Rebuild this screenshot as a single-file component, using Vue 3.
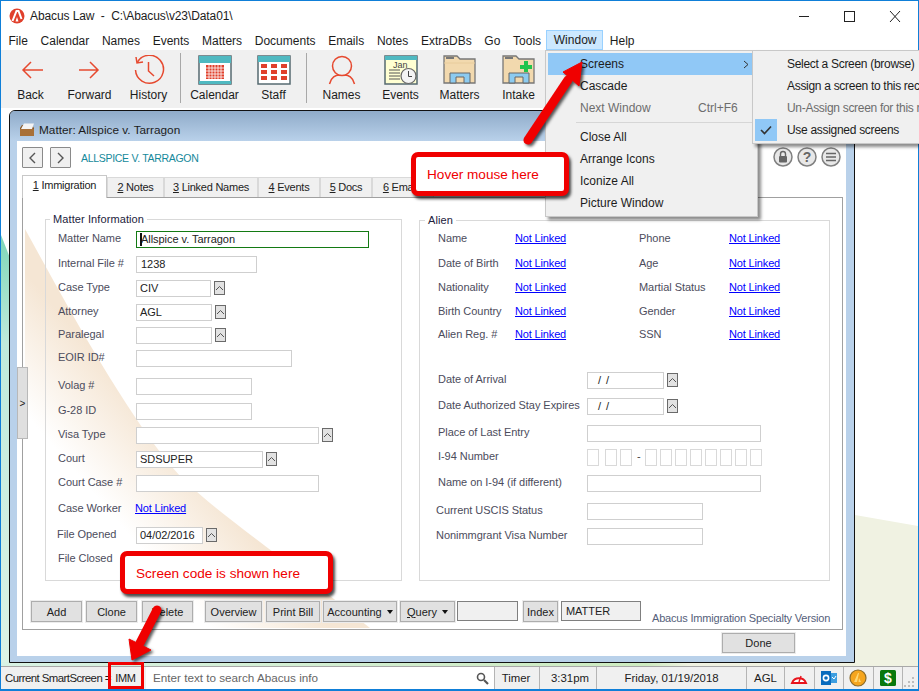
<script setup>
const appTitle = 'Abacus Law  -  C:\\Abacus\\v23\\Data01\\'

const menus = ['File', 'Calendar', 'Names', 'Events', 'Matters', 'Documents', 'Emails', 'Notes', 'ExtraDBs', 'Go', 'Tools', 'Window', 'Help']

const tabs = [
  { n: '1', label: ' Immigration', w: 85, active: true },
  { n: '2', label: ' Notes', w: 57 },
  { n: '3', label: ' Linked Names', w: 94 },
  { n: '4', label: ' Events', w: 62 },
  { n: '5', label: ' Docs', w: 52 },
  { n: '6', label: ' Emails', w: 62 }
]

// h = distancia hasta la fila siguiente, w = ancho del campo
const matterRows = [
  { label: 'Matter Name', h: 25, w: 233, value: 'Allspice v. Tarragon', focus: true },
  { label: 'Internal File #', h: 24, w: 121, value: '1238', inset: true },
  { label: 'Case Type', h: 24, w: 75, value: 'CIV', spin: true },
  { label: 'Attorney', h: 23, w: 76, value: 'AGL', spin: true },
  { label: 'Paralegal', h: 23, w: 76, value: '', spin: true },
  { label: 'EOIR ID#', h: 28, w: 156, value: '' },
  { label: 'Volag #', h: 25, w: 116, value: '' },
  { label: 'G-28 ID', h: 24, w: 116, value: '' },
  { label: 'Visa Type', h: 24, w: 183, value: '', spin: true },
  { label: 'Court', h: 24, w: 127, value: 'SDSUPER', spin: true },
  { label: 'Court Case #', h: 24, w: 183, value: '' },
  { label: 'Case Worker', h: 28, link: true },
  { label: 'File Opened', h: 24, w: 67, value: '04/02/2016', spin: true, shift: true },
  { label: 'File Closed', h: 20, w: 0 }
]

const alienRows = [
  { a: 'Name', b: 'Phone', h: 25 },
  { a: 'Date of Birth', b: 'Age', h: 24 },
  { a: 'Nationality', b: 'Martial Status', h: 24 },
  { a: 'Birth Country', b: 'Gender', h: 23 },
  { a: 'Alien Reg. #', b: 'SSN', h: 46 }
]

const alienFields = [
  { label: 'Date of Arrival', h: 26, w: 77, value: '/ /', spin: true, date: true },
  { label: 'Date Authorized Stay Expires', h: 27, w: 77, value: '/ /', spin: true, date: true },
  { label: 'Place of Last Entry', h: 24, w: 174, value: '' },
  { label: 'I-94 Number', h: 26, i94: true },
  { label: 'Name on I-94 (if different)', h: 28, w: 174, value: '' },
  { label: 'Current USCIS Status', h: 25, w: 116, value: '', shift: true },
  { label: 'Nonimmgrant Visa Number', h: 20, w: 116, value: '', shift: true }
]

const windowMenu = [
  { label: 'Screens', active: true, more: true },
  { label: 'Cascade' },
  { label: 'Next Window', off: true, key: 'Ctrl+F6', sepAfter: true },
  { label: 'Close All' },
  { label: 'Arrange Icons' },
  { label: 'Iconize All' },
  { label: 'Picture Window' }
]

const screensMenu = [
  { label: 'Select a Screen (browse)' },
  { label: 'Assign a screen to this record' },
  { label: 'Un-Assign screen for this record', off: true },
  { label: 'Use assigned screens', checked: true }
]
</script>

<template>
  <div class="screen">
    <div class="win">
      <!-- barra de título -->
      <header class="titlebar">
        <svg class="logo" width="16" height="16" viewBox="0 0 16 16">
          <circle cx="8" cy="8" r="7.5" fill="#e0402c" />
          <path d="M3.5 13 L7.5 3 H9.5 L12.5 11" fill="none" stroke="#fff" stroke-width="2" />
          <path d="M8 9 L6.5 13.5 H9.5 Z" fill="#fff" />
        </svg>
        <span class="apptitle">{{ appTitle }}</span>
        <svg class="winctl" width="120" height="30" viewBox="0 0 120 30">
          <path d="M4 15.5 H14" stroke="#222" fill="none" />
          <rect x="49.5" y="10.5" width="10" height="10" stroke="#222" fill="none" />
          <path d="M95 10 L105 21 M105 10 L95 21" stroke="#222" fill="none" />
        </svg>
      </header>

      <nav class="menubar">
        <span v-for="m in menus" :key="m" class="menu" :class="{ open: m === 'Window' }">{{ m }}</span>
      </nav>

      <!-- barra de herramientas -->
      <div class="toolbar">
        <button class="tool">
          <svg width="32" height="30" viewBox="0 0 32 30"><path d="M8 15 H28 M16 7 L8 15 L16 23" class="ic" /></svg>
          <span>Back</span>
        </button>
        <button class="tool">
          <svg width="32" height="30" viewBox="0 0 32 30"><path d="M5 15 H24 M16 7 L24 15 L16 23" class="ic" /></svg>
          <span>Forward</span>
        </button>
        <button class="tool">
          <svg width="32" height="30" viewBox="0 0 32 30">
            <path d="M4.5 7 A14 14 0 1 1 2.5 15" class="ic" />
            <path d="M3 2 L4 8 L10 7 M15.5 7 V16 L21 21" class="ic" />
          </svg>
          <span>History</span>
        </button>
        <i class="sep"></i>
        <button class="tool">
          <svg width="34" height="30" viewBox="0 0 34 30">
            <rect x="1" y="1" width="32" height="28" fill="#fff" stroke="#566a70" stroke-width="1.5" />
            <rect x="1" y="1" width="32" height="7" fill="#4fb9c1" />
            <rect x="1" y="26" width="32" height="3" fill="#4fb9c1" />
            <g fill="#e0402c">
              <rect x="8" y="10" width="18" height="14" />
            </g>
            <path d="M11 10 V24 M14 10 V24 M17 10 V24 M20 10 V24 M23 10 V24 M8 13 H26 M8 16 H26 M8 19 H26 M8 22 H26" stroke="#fff" stroke-width=".8" />
          </svg>
          <span>Calendar</span>
        </button>
        <button class="tool">
          <svg width="34" height="30" viewBox="0 0 34 30">
            <rect x="1" y="1" width="32" height="28" fill="#fff" stroke="#566a70" stroke-width="1.5" />
            <rect x="1" y="1" width="32" height="6" fill="#4fb9c1" />
            <g fill="#e0402c">
              <rect x="4" y="9" width="6" height="4" /><rect x="14" y="9" width="6" height="4" /><rect x="24" y="9" width="6" height="4" />
              <rect x="4" y="15" width="6" height="4" /><rect x="14" y="15" width="6" height="4" /><rect x="24" y="15" width="6" height="4" />
              <rect x="4" y="21" width="6" height="4" /><rect x="14" y="21" width="6" height="4" /><rect x="24" y="21" width="6" height="4" />
            </g>
          </svg>
          <span>Staff</span>
        </button>
        <i class="sep two"></i>
        <button class="tool">
          <svg width="32" height="30" viewBox="0 0 32 30">
            <circle cx="16" cy="11" r="9.5" class="ic" />
            <path d="M3.5 29 C5 22 10 20 13 20 M28.5 29 C27 22 22 20 19 20" class="ic" />
          </svg>
          <span>Names</span>
        </button>
        <button class="tool">
          <svg width="34" height="30" viewBox="0 0 34 30">
            <rect x="1" y="1" width="32" height="28" fill="#ffffd2" stroke="#566a70" stroke-width="1.5" />
            <rect x="1" y="1" width="32" height="4" fill="#4fb9c1" />
            <text x="9" y="13" class="jan">Jan</text>
            <path d="M5 15 H16 M5 18 H16 M5 21 H16 M5 24 H16" stroke="#555" />
            <circle cx="24.5" cy="21" r="7.5" fill="#f4f4f4" stroke="#666" stroke-width="1.2" />
            <path d="M24.5 16 V21.5 H28" stroke="#444" fill="none" />
          </svg>
          <span>Events</span>
        </button>
        <button class="tool">
          <svg width="33" height="30" viewBox="0 0 33 30">
            <path d="M1 1 H14 L17 4 H32 V28 H1 Z" fill="#f2d9ae" stroke="#777" stroke-width="1.3" />
            <path d="M3 3 H11" stroke="#777" stroke-width="2" />
            <path d="M1 8 H32" stroke="#e8cc9c" />
            <path d="M7 28 V18 H27 V28 H21 V22 H13 V28 Z" fill="#8ccbf0" stroke="#666" />
          </svg>
          <span>Matters</span>
        </button>
        <button class="tool">
          <svg width="33" height="30" viewBox="0 0 33 30">
            <path d="M1 1 H14 L17 4 H32 V28 H1 Z" fill="#f2d9ae" stroke="#777" stroke-width="1.3" />
            <path d="M3 3 H11" stroke="#777" stroke-width="2" />
            <path d="M7 28 V18 H27 V28 H21 V22 H13 V28 Z" fill="#8ccbf0" stroke="#666" />
            <path d="M22 6 H26 V10 H30 V14 H26 V17 H22 V14 H18 V10 H22 Z" fill="#22c44c" />
          </svg>
          <span>Intake</span>
        </button>
      </div>

      <!-- área de trabajo -->
      <main class="desk">
        <svg class="wallpaper" viewBox="1 108 917 558" width="917" height="558">
          <defs>
            <linearGradient id="teal" x1="0" y1="0" x2="0" y2="1">
              <stop offset="0" stop-color="#7fd6b8" />
              <stop offset=".25" stop-color="#bfeadb" />
              <stop offset="1" stop-color="#dcf3e6" />
            </linearGradient>
            <linearGradient id="strip" x1="0" y1="0" x2="1" y2="0">
              <stop offset="0" stop-color="#d8f2e4" />
              <stop offset=".75" stop-color="#cdebc0" />
              <stop offset=".8" stop-color="#f0f2e2" />
            </linearGradient>
          </defs>
          <path d="M1 235 L10 258 V666 H1 Z" fill="url(#teal)" />
          <rect x="1" y="662" width="860" height="4" fill="url(#strip)" />
          <path d="M855 515 L918 526 V666 H855 Z" fill="#f0f2e2" />
        </svg>

        <section class="mdi">
          <div class="caption">
            <svg width="16" height="14" viewBox="0 0 16 14">
              <path d="M1 5 L3 2 H13 L15 5 V13 H1 Z" fill="#8a5a2a" />
              <path d="M2 6 L5 0.5 H15 L13 6 Z" fill="#f4f4f4" />
              <path d="M1 6 H15 V13 H1 Z" fill="#a87038" />
            </svg>
            <span>Matter: Allspice v. Tarragon</span>
          </div>

          <div class="mdibody">
            <div class="rechead">
              <button class="navbtn">
                <svg width="9" height="12" viewBox="0 0 9 12"><path d="M7 1 L2 6 L7 11" fill="none" stroke="#555" stroke-width="1.4" /></svg>
              </button>
              <button class="navbtn">
                <svg width="9" height="12" viewBox="0 0 9 12"><path d="M2 1 L7 6 L2 11" fill="none" stroke="#555" stroke-width="1.4" /></svg>
              </button>
              <span class="rectitle">ALLSPICE V. TARRAGON</span>
              <div class="roundbtns">
                <svg width="20" height="20" viewBox="0 0 20 20">
                  <circle cx="10" cy="10" r="9" class="rb" />
                  <rect x="6" y="9" width="8" height="6.5" rx="1" fill="#666" />
                  <path d="M7.5 9 V7 A2.5 2.5 0 0 1 12.5 7 V9" fill="none" stroke="#666" stroke-width="1.4" />
                </svg>
                <svg width="20" height="20" viewBox="0 0 20 20">
                  <circle cx="10" cy="10" r="9" class="rb" />
                  <text x="10" y="15" text-anchor="middle" class="qm">?</text>
                </svg>
                <svg width="20" height="20" viewBox="0 0 20 20">
                  <circle cx="10" cy="10" r="9" class="rb" />
                  <path d="M5 6.5 H15 M5 10 H15 M5 13.5 H15" stroke="#666" stroke-width="1.6" />
                </svg>
              </div>
            </div>

            <div class="tabs">
              <span
                v-for="t in tabs"
                :key="t.n"
                class="tab"
                :class="{ active: t.active }"
                :style="{ width: t.w + 'px' }"
              ><u>{{ t.n }}</u>{{ t.label }}</span>
            </div>

            <div class="panel">
              <svg class="swoosh" viewBox="23 197 819 430" width="819" height="430">
                <defs>
                  <linearGradient id="beige" gradientUnits="userSpaceOnUse" x1="100" y1="500" x2="170" y2="440">
                    <stop offset="0" stop-color="#fff" />
                    <stop offset="1" stop-color="#f5e6d4" />
                  </linearGradient>
                </defs>
                <path d="M25 228 C70 310 130 420 180 475 C220 515 270 545 370 627 H25 Z" fill="url(#beige)" />
              </svg>

              <div class="groups">
                <fieldset class="group matter">
                  <legend>Matter Information</legend>
                  <div v-for="r in matterRows" :key="r.label" class="row" :style="{ height: r.h + 'px' }">
                    <span class="lbl" :class="{ shift: r.shift, down: r.link }">{{ r.label }}</span>
                    <a v-if="r.link" class="link">Not Linked</a>
                    <div
                      v-else-if="r.w"
                      class="field"
                      :class="{ focus: r.focus, inset: r.inset || r.focus }"
                      :style="{ width: r.w + 'px' }"
                    ><i v-if="r.focus" class="caret"></i>{{ r.value }}</div>
                    <button v-if="r.spin" class="spin">
                      <svg width="9" height="6" viewBox="0 0 9 6"><path d="M1 5 L4.5 1.5 L8 5" fill="none" stroke="#555" /></svg>
                    </button>
                  </div>
                </fieldset>

                <fieldset class="group alien">
                  <legend>Alien</legend>
                  <div v-for="r in alienRows" :key="r.a" class="row linkrow" :style="{ height: r.h + 'px' }">
                    <span class="lbl">{{ r.a }}</span>
                    <a class="link">Not Linked</a>
                    <span class="lbl">{{ r.b }}</span>
                    <a class="link">Not Linked</a>
                  </div>
                  <div v-for="r in alienFields" :key="r.label" class="row fieldrow" :style="{ height: r.h + 'px' }">
                    <span class="lbl" :class="{ shift: r.shift }">{{ r.label }}</span>
                    <div v-if="r.i94" class="i94">
                      <i class="cell"></i><i class="cell gap"></i><i class="cell"></i>
                      <span class="dash">-</span>
                      <i v-for="n in 8" :key="n" class="cell"></i>
                    </div>
                    <div v-else class="field" :class="{ date: r.date }" :style="{ width: r.w + 'px' }">{{ r.value }}</div>
                    <button v-if="r.spin" class="spin">
                      <svg width="9" height="6" viewBox="0 0 9 6"><path d="M1 5 L4.5 1.5 L8 5" fill="none" stroke="#555" /></svg>
                    </button>
                  </div>
                </fieldset>
              </div>

              <div class="actions">
                <button class="btn w51">Add</button>
                <button class="btn w51 clone">Clone</button>
                <button class="btn w51">Delete</button>
                <button class="btn w57 push">Overview</button>
                <button class="btn w54">Print Bill</button>
                <button class="btn w74">Accounting <b class="tri"></b></button>
                <button class="btn w55"><u>Q</u>uery <b class="tri"></b></button>
                <div class="box w61"></div>
                <button class="btn w35 push2">Index</button>
                <div class="box w80">MATTER</div>
                <span class="edition">Abacus Immigration Specialty Version</span>
              </div>

              <button class="handle">&gt;</button>
            </div>

            <div class="donebar">
              <button class="btn done">Done</button>
            </div>
          </div>
        </section>
      </main>

      <!-- barra de estado -->
      <footer class="status">
        <span class="cell-s smart">Current SmartScreen =</span>
        <span class="cell-s imm">IMM</span>
        <div class="search">
          <span>Enter text to search Abacus info</span>
          <svg width="13" height="13" viewBox="0 0 13 13">
            <circle cx="5" cy="5" r="3.5" fill="none" stroke="#555" stroke-width="1.6" />
            <path d="M8 8 L12 12" stroke="#555" stroke-width="2.2" />
          </svg>
        </div>
        <span class="cell-s timer">Timer</span>
        <span class="cell-s time">3:31pm</span>
        <span class="cell-s date-s">Friday, 01/19/2018</span>
        <span class="cell-s agl">AGL</span>
        <span class="cell-s ico">
          <svg width="18" height="12" viewBox="0 0 18 12">
            <path d="M2 11 A7.5 7.5 0 0 1 16 11 Z" fill="#fff" stroke="#e8141c" stroke-width="2" />
            <path d="M9 10 L11 4" stroke="#e8141c" stroke-width="1.4" />
          </svg>
        </span>
        <span class="cell-s ico">
          <svg width="16" height="16" viewBox="0 0 16 16">
            <rect x="6" y="3" width="10" height="10" fill="#3d9ee0" />
            <rect x="0" y="1" width="10" height="14" fill="#0a6cbd" />
            <circle cx="5" cy="8" r="2.6" fill="none" stroke="#fff" stroke-width="1.6" />
            <path d="M11 7 L13 9 L15 6" stroke="#fff" fill="none" />
          </svg>
        </span>
        <span class="cell-s ico">
          <svg width="18" height="18" viewBox="0 0 18 18">
            <circle cx="9" cy="9" r="8" fill="#f5a51e" stroke="#8a6a2a" stroke-width="1.2" />
            <path d="M5 13 L9 4 L10 4 L8 13 Z M10 9 L12 13 H9.5 Z" fill="#ffd873" />
          </svg>
        </span>
        <span class="cell-s ico">
          <svg width="16" height="16" viewBox="0 0 16 16">
            <rect width="16" height="16" rx="1.5" fill="#08780c" />
            <text x="8" y="13" text-anchor="middle" class="dollar">$</text>
          </svg>
        </span>
        <span class="grip">
          <svg width="12" height="12" viewBox="0 0 12 12" fill="#bdbdbd">
            <rect x="8" y="2" width="2" height="2" />
            <rect x="4" y="6" width="2" height="2" /><rect x="8" y="6" width="2" height="2" />
            <rect x="0" y="10" width="2" height="2" /><rect x="4" y="10" width="2" height="2" /><rect x="8" y="10" width="2" height="2" />
          </svg>
        </span>
      </footer>
    </div>

    <!-- menús abiertos -->
    <ul class="dropdown window-menu">
      <template v-for="m in windowMenu" :key="m.label">
        <li class="mi" :class="{ hot: m.active, off: m.off }">
          <span>{{ m.label }}</span>
          <span v-if="m.key" class="key">{{ m.key }}</span>
          <svg v-if="m.more" class="chev" width="6" height="9" viewBox="0 0 6 9"><path d="M1 1 L5 4.5 L1 8" fill="none" stroke="#333" /></svg>
        </li>
        <li v-if="m.sepAfter" class="misep"></li>
      </template>
    </ul>
    <ul class="dropdown screens-menu">
      <li v-for="m in screensMenu" :key="m.label" class="mi" :class="{ off: m.off }">
        <span v-if="m.checked" class="tick">
          <svg width="12" height="10" viewBox="0 0 12 10"><path d="M1 5 L4.5 8.5 L11 1.5" fill="none" stroke="#333" stroke-width="1.6" /></svg>
        </span>
        <span>{{ m.label }}</span>
      </li>
    </ul>

    <!-- anotaciones -->
    <div class="callout hover-note">Hover mouse here</div>
    <div class="callout code-note">Screen code is shown here</div>
    <div class="immbox"></div>
    <svg class="arrows" width="919" height="691" viewBox="0 0 919 691">
      <g class="arrow">
        <path d="M528 140 L568 80" stroke="#f00000" stroke-width="9" stroke-linecap="round" />
        <path d="M582 62 L563 72 L579 86 Z" fill="#f00000" stroke="#f00000" stroke-width="1" stroke-linejoin="round" />
      </g>
      <g class="arrow">
        <path d="M157 610 L140 643" stroke="#f00000" stroke-width="9" stroke-linecap="round" />
        <path d="M132 660 L129 639 L151 650 Z" fill="#f00000" stroke="#f00000" stroke-width="1" stroke-linejoin="round" />
      </g>
    </svg>
  </div>
</template>

<style scoped>
.screen {
  position: relative;
  width: 919px;
  height: 691px;
  overflow: hidden;
  font-family: "Liberation Sans", Arial, sans-serif;
  font-size: 12px;
  color: #1c1c1c;
}

button {
  font: inherit;
  color: inherit;
  padding: 0;
}

.win {
  display: flex;
  flex-direction: column;
  box-sizing: border-box;
  height: 691px;
  background: #fff;
  border: 1px solid #0f7fd8;
  border-bottom-width: 2px;
}

.titlebar {
  display: flex;
  align-items: center;
  height: 29px;
  flex: none;
  position: relative;
}

.logo {
  margin-left: 8px;
}

.apptitle {
  margin-left: 5px;
  white-space: pre;
  letter-spacing: -0.1px;
}

.winctl {
  margin-left: auto;
  margin-right: 3px;
}

.menubar {
  display: flex;
  height: 20px;
  flex: none;
  padding-left: 0;
}

.menu {
  padding: 0 6.5px;
  line-height: 23px;
  border: 1px solid transparent;
  border-width: 0 1px;
  margin-right: -2.3px;
}

.menu.open {
  background: #cce8ff;
  border: 1px solid #99d1ff;
  line-height: 19px;
  height: 20px;
  box-sizing: border-box;
  width: 57px;
  margin-right: -1px;
}

.toolbar {
  display: flex;
  align-items: flex-start;
  height: 58px;
  flex: none;
  background: #f0f0f0;
}

.tool {
  display: flex;
  flex-direction: column;
  align-items: center;
  width: 59px;
  padding-top: 5px;
  background: none;
  border: 0;
}

.tool span {
  margin-top: 2px;
  line-height: 16px;
}

.ic {
  fill: none;
  stroke: #e6492f;
  stroke-width: 1.5;
}

.jan {
  font-size: 9px;
  fill: #444;
}

.sep {
  width: 1px;
  height: 50px;
  margin: 3px 4px 0 2px;
  background: #a8a8a8;
}

.sep.two {
  margin: 3px 5px 0 3px;
}

.desk {
  position: relative;
  flex: 1;
  min-height: 0;
}

.wallpaper {
  position: absolute;
  left: 0;
  top: 0;
}

.mdi {
  position: absolute;
  left: 8px;
  top: 2px;
  box-sizing: border-box;
  width: 846px;
  height: 553px;
  display: flex;
  flex-direction: column;
  border: 1px solid #111;
  border-radius: 6px 6px 0 0;
  background: #b9d1ea;
  padding: 0 8px 6px 7px;
}

.caption {
  display: flex;
  align-items: center;
  gap: 4px;
  flex: none;
  height: 30px;
  margin: 0 -8px 0 -7px;
  padding: 7px 0 0 9px;
  box-sizing: border-box;
  border-radius: 5px 5px 0 0;
  background: linear-gradient(#8fabc9, #b9d1ea);
  font-size: 11.8px;
}

.mdibody {
  flex: 1;
  display: flex;
  flex-direction: column;
  background: #fff;
  padding: 0 3px 0 5px;
  font-size: 11px;
  letter-spacing: -0.05px;
  color: #4c4c5c;
}

.rechead {
  display: flex;
  align-items: center;
  height: 33px;
  flex: none;
  box-sizing: border-box;
}

.navbtn {
  display: flex;
  align-items: center;
  justify-content: center;
  width: 21px;
  height: 21px;
  margin-right: 7px;
  background: #f0f0f0;
  border: 1px solid #8a8a8a;
  border-radius: 1px;
}

.rectitle {
  margin: 1px 0 0 3px;
  color: #15899b;
  font-size: 10.5px;
  letter-spacing: -0.3px;
}

.roundbtns {
  display: flex;
  gap: 4px;
  margin-left: auto;
  margin-right: 2px;
  padding-bottom: 2px;
}

.rb {
  fill: #e8e8e8;
  stroke: #808080;
  stroke-width: 1.5;
}

.qm {
  font-size: 14px;
  font-weight: 700;
  fill: #666;
}

.tabs {
  display: flex;
  align-items: flex-end;
  height: 23px;
  flex: none;
  position: relative;
  z-index: 1;
}

.tab {
  box-sizing: border-box;
  height: 20px;
  padding-top: 3px;
  text-align: center;
  background: #f0f0f0;
  border: 1px solid #d9d9d9;
  border-bottom: 0;
  color: #222;
  white-space: pre;
  letter-spacing: -0.25px;
}

.tab.active {
  height: 23px;
  background: #fff;
  border-color: #c8c8c8;
  padding-top: 3px;
  margin-bottom: -1px;
}

.panel {
  position: relative;
  isolation: isolate;
  box-sizing: border-box;
  height: 433px;
  flex: none;
  border: 1px solid #a0a0a0;
  background: #fff;
}

.swoosh {
  position: absolute;
  left: 0;
  top: 0;
  z-index: -1;
}

.groups {
  display: flex;
  align-items: flex-start;
  gap: 17px;
  padding: 21px 0 0 22px;
}

.group {
  box-sizing: border-box;
  margin: 0;
  min-width: 0;
  border: 1px solid #d9d9d9;
}

.group legend {
  color: #22223c;
  padding: 0 3px;
  line-height: 13px;
  height: 13px;
  letter-spacing: 0.1px;
}

.matter {
  width: 357px;
  height: 368px;
  padding: 5px 0 0 12px;
  margin-top: -6px;
}

.matter legend {
  margin-left: -8px;
}

.alien {
  width: 411px;
  height: 367px;
  padding: 3px 0 0 18px;
  margin-top: -5px;
}

.alien legend {
  margin-left: -13px;
}

.row {
  display: flex;
  align-items: flex-start;
}

.lbl {
  flex: none;
  width: 78px;
  line-height: 15px;
  white-space: nowrap;
}

.matter .lbl.shift {
  margin-left: -1px;
  margin-right: 1px;
}

.matter .lbl.down {
  margin-top: 2px;
}

.linkrow .lbl {
  line-height: 17px;
}

.linkrow .lbl:nth-child(1) {
  width: 77px;
}

.linkrow .lbl:nth-child(3) {
  width: 90px;
}

.linkrow .link:nth-child(2) {
  width: 124px;
}

.fieldrow .lbl {
  width: 149px;
}

.fieldrow .lbl.shift {
  margin-left: -2px;
  margin-right: 2px;
}

.link {
  color: #0000ff;
  text-decoration: underline;
  line-height: 17px;
  letter-spacing: -0.15px;
}

.matter .link {
  margin: 1px 0 0 -1px;
}

.field {
  position: relative;
  box-sizing: border-box;
  height: 17px;
  padding-left: 3px;
  line-height: 15px;
  background: #fff;
  border: 1px solid #cfcfcf;
  color: #222;
  white-space: nowrap;
}

.field.inset {
  padding-left: 4px;
}

.field.date {
  padding-left: 10px;
  word-spacing: 2px;
}

.field.focus {
  border-color: #137a13;
}

.caret {
  position: absolute;
  left: 3px;
  top: 1px;
  width: 2px;
  height: 13px;
  background: #111;
}

.spin {
  display: flex;
  align-items: center;
  justify-content: center;
  box-sizing: border-box;
  width: 11px;
  height: 14px;
  margin: 1px 0 0 3px;
  background: #e2e2e2;
  border: 1px solid #6a6a6a;
}

.i94 {
  display: flex;
  gap: 3px;
}

.cell {
  box-sizing: border-box;
  width: 12px;
  height: 17px;
  border: 1px solid #d9d9d9;
  background: #fff;
}

.cell.gap {
  margin-left: 3px;
}

.dash {
  width: 7px;
  padding-left: 2px;
  box-sizing: border-box;
  line-height: 15px;
  color: #444;
}

.actions {
  display: flex;
  gap: 4px;
  margin-top: 20px;
  padding-left: 8px;
  align-items: flex-start;
}

.btn {
  box-sizing: border-box;
  height: 21px;
  background: #e1e1e1;
  border: 1px solid #adadad;
  outline: 1px solid #ececec;
  color: #222;
  white-space: nowrap;
}

.w51 { width: 51px; }
.clone { margin-right: 1px; }
.w57 { width: 57px; }
.w54 { width: 54px; margin-right: -1px; }
.w74 { width: 74px; margin-right: -1px; }
.w55 { width: 55px; margin-right: -2px; }
.w61 { width: 61px; }
.w35 { width: 35px; margin-right: -1px; }
.w80 { width: 80px; }

.push { margin-left: 8px; }
.push2 { margin-left: 1px; }

.tri {
  display: inline-block;
  margin-left: 2px;
  border: 3.5px solid transparent;
  border-top: 4px solid #111;
  border-bottom: 0;
  vertical-align: 2px;
}

.box {
  box-sizing: border-box;
  height: 20px;
  line-height: 18px;
  padding-left: 4px;
  background: #f0f0f0;
  border: 1px solid #7f7f7f;
  color: #222;
}

.edition {
  margin: 10px 0 0 7px;
  line-height: 14px;
  white-space: nowrap;
  letter-spacing: -0.18px;
  color: #55607a;
}

.handle {
  position: absolute;
  left: -6px;
  top: 169px;
  width: 11px;
  height: 72px;
  background: #dfdfdf;
  border: 1px solid #b8b8b8;
  font-size: 10px;
  color: #222;
}

.donebar {
  display: flex;
  justify-content: flex-end;
  padding: 3px 48px 0 0;
}

.done {
  width: 73px;
  height: 20px;
}

.status {
  display: flex;
  align-items: stretch;
  flex: none;
  height: 23px;
  background: #f0f0f0;
  border-top: 1px solid #a8a8a8;
  box-sizing: border-box;
  font-size: 11.4px;
  line-height: 22px;
}

.cell-s {
  display: flex;
  align-items: center;
  justify-content: center;
  box-sizing: border-box;
  border-right: 1px solid #b4b4b4;
  white-space: nowrap;
}

.smart { width: 107px; justify-content: flex-start; padding-left: 4px; border-right: 0; letter-spacing: -0.55px; }
.imm { width: 38px; border-right: 0; padding-right: 3px; font-size: 11px; letter-spacing: -0.3px; }
.timer { width: 45px; padding-right: 2px; }
.time { width: 57px; padding-left: 4px; }
.date-s { width: 150px; }
.agl { width: 38px; }
.ico { width: 29.5px; }

.search {
  display: flex;
  align-items: center;
  justify-content: space-between;
  box-sizing: border-box;
  width: 349px;
  padding: 0 5px 0 7px;
  background: #fff;
  color: #666;
  border-right: 1px solid #b4b4b4;
  font-size: 11.7px;
}

.dollar {
  font-size: 14px;
  font-weight: 700;
  fill: #fff;
}

.grip {
  display: flex;
  align-items: flex-end;
  justify-content: flex-end;
  flex: 1;
  padding: 0 2px 2px 0;
}

.dropdown {
  position: absolute;
  z-index: 5;
  top: 50px;
  box-sizing: border-box;
  margin: 0;
  padding: 2px;
  list-style: none;
  background: #f0f0f0;
  border: 1px solid #c8c8c8;
  box-shadow: 3px 3px 3px rgba(0, 0, 0, 0.45);
  font-size: 12px;
}

.window-menu {
  left: 545px;
  width: 213px;
  height: 167px;
}

.screens-menu {
  left: 752px;
  width: 190px;
  height: 94px;
  letter-spacing: -0.3px;
}

.mi {
  position: relative;
  display: flex;
  align-items: center;
  height: 22px;
  padding-left: 32px;
  white-space: nowrap;
}

.mi.hot {
  background: #90c8f6;
}

.mi.off {
  color: #6d6d6d;
}

.key {
  position: absolute;
  left: 150px;
}

.chev {
  position: absolute;
  right: 6px;
  top: 7px;
}

.misep {
  height: 1px;
  margin: 3px 2px 3px 28px;
  background: #d6d6d6;
}

.tick {
  position: absolute;
  left: 0;
  top: 0;
  display: flex;
  align-items: center;
  justify-content: center;
  width: 22px;
  height: 22px;
  background: #90c8f6;
}

.callout {
  position: absolute;
  z-index: 5;
  box-sizing: border-box;
  padding-left: 11px;
  background: #fff;
  border: 5px solid #f00000;
  border-radius: 7px;
  box-shadow: 2px 3px 3px rgba(0, 0, 0, 0.7);
  color: #f00000;
  font-size: 13.6px;
  white-space: nowrap;
}

.hover-note {
  left: 411px;
  top: 152px;
  width: 158px;
  height: 44px;
  line-height: 35px;
}

.code-note {
  left: 120px;
  top: 551px;
  width: 213px;
  height: 43px;
  line-height: 35px;
}

.immbox {
  position: absolute;
  z-index: 5;
  left: 108px;
  top: 662px;
  box-sizing: border-box;
  width: 36px;
  height: 27px;
  border: 3px solid #f00000;
}

.arrows {
  position: absolute;
  z-index: 6;
  left: 0;
  top: 0;
  pointer-events: none;
}

.arrow {
  filter: drop-shadow(2px 2px 1.5px rgba(0, 0, 0, 0.65));
}
</style>

<style>
html, body {
  margin: 0;
  background: #fff;
}
</style>
